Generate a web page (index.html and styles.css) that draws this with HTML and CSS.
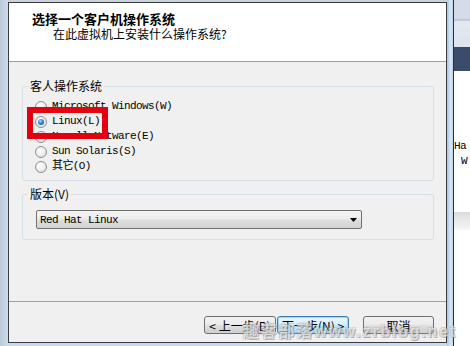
FILE: index.html
```html
<!DOCTYPE html>
<html lang="zh-CN">
<head>
<meta charset="utf-8">
<title>新建虚拟机向导</title>
<link rel="stylesheet" href="styles.css">
</head>
<body>
<div class="screen">
  <div class="frame-left"></div>
  <div class="dialog">
    <div class="header">
      <div class="title">选择一个客户机操作系统</div>
      <div class="subtitle">在此虚拟机上安装什么操作系统?</div>
    </div>
    <div class="content">
      <fieldset class="group">
        <legend>客人操作系统</legend>
        <div class="group-body os-list">
          <div class="radio-row"><span class="radio"></span><span class="rlabel">Microsoft Windows(W)</span></div>
          <div class="radio-row"><span class="radio checked"></span><span class="rlabel">Linux(L)</span></div>
          <div class="radio-row"><span class="radio"></span><span class="rlabel">Novell Netware(E)</span></div>
          <div class="radio-row"><span class="radio"></span><span class="rlabel">Sun Solaris(S)</span></div>
          <div class="radio-row"><span class="radio"></span><span class="rlabel">其它(O)</span></div>
        </div>
      </fieldset>
      <fieldset class="group group-ver">
        <legend>版本(V)</legend>
        <div class="group-body ver-body">
          <div class="select">
            <span class="select-text">Red Hat Linux</span>
            <svg class="select-arrow" width="7" height="4" viewBox="0 0 7 4"><path d="M0 0H7L3.5 4Z" fill="#000"/></svg>
          </div>
        </div>
      </fieldset>
    </div>
    <div class="footer">
      <button class="btn btn-back">&lt; 上一步(B)</button>
      <button class="btn btn-next">下一步(N) &gt;</button>
      <button class="btn btn-cancel">取消</button>
    </div>
  </div>
  <div class="frame-right"></div>
  <div class="behind">
    <div class="behind-top"></div>
    <div class="behind-bar"></div>
    <div class="behind-text">Ha</div>
    <div class="behind-text behind-w">W</div>
    <div class="behind-band"></div>
  </div>
  <div class="highlight"></div>
  <div class="watermark">趣客部落www.zrblog.net</div>
</div>
</body>
</html>
```
FILE: styles.css
```css
html, body {
  margin: 0;
  padding: 0;
}
body {
  font-family: "Noto Sans CJK SC", "Liberation Sans", sans-serif;
  color: #000;
}
.screen {
  position: relative;
  width: 470px;
  height: 346px;
  display: flex;
  overflow: hidden;
  background: linear-gradient(180deg, #c9d3df 0px, #c4d6ea 90px, #c6dbf1 346px);
}
.frame-left {
  width: 8px;
  flex: none;
  background: linear-gradient(90deg, #bcc9d8, #cbdcef);
}
.dialog {
  width: 439px;
  height: 341px;
  margin-top: 2px;
  box-sizing: border-box;
  border: 1px solid #3c3c3c;
  flex: none;
  display: flex;
  flex-direction: column;
  background: #f0f0f0;
}
.header {
  height: 50px;
  padding: 8px 0 0 23px;
  background: #fff;
  border-bottom: 1px solid #a0a0a0;
}
.title {
  font-size: 13px;
  line-height: 16px;
  font-weight: bold;
}
.subtitle {
  font-size: 12px;
  line-height: 15px;
  margin-top: -1px;
  padding-left: 21px;
}
.content {
  flex: 1;
  padding: 17px 12px 0 13px;
}
.group {
  margin: 0;
  padding: 0;
  min-width: 0;
  border: 1px solid #d5dfe5;
  border-radius: 3px;
}
.group legend {
  margin-left: 5px;
  padding: 0 2px;
  font-size: 12px;
  line-height: 14px;
}
.group-ver {
  margin-top: 6px;
}
.os-list {
  padding: 6px 12px 6px 12px;
}
.radio-row {
  height: 15px;
  display: flex;
  align-items: center;
}
.radio {
  width: 12px;
  height: 12px;
  box-sizing: border-box;
  border-radius: 50%;
  border: 1px solid #8c8f94;
  background: radial-gradient(circle at 40% 35%, #ffffff 0, #f2f2f2 40%, #d6d6d6 100%);
  margin-right: 5px;
  flex: none;
  display: flex;
  align-items: center;
  justify-content: center;
}
.radio.checked::after {
  content: "";
  width: 6px;
  height: 6px;
  border-radius: 50%;
  background: radial-gradient(circle at 40% 35%, #9fd6fb 0, #2b76b8 55%, #0f3f78 100%);
}
.rlabel {
  font-family: "Liberation Mono", "Noto Sans CJK SC", monospace;
  font-size: 11px;
  letter-spacing: -0.6px;
  line-height: 15px;
}
.ver-body {
  padding: 9px 12px 10px 13px;
}
.select {
  width: 326px;
  height: 19px;
  box-sizing: border-box;
  border: 1px solid #707070;
  border-radius: 2px;
  background: linear-gradient(180deg, #f4f4f4 0%, #ececec 45%, #dedede 55%, #d2d2d2 100%);
  display: flex;
  align-items: center;
  justify-content: space-between;
  padding: 0 4px 0 3px;
}
.select-text {
  font-family: "Liberation Mono", monospace;
  font-size: 11px;
  letter-spacing: -0.6px;
}
.select-arrow {
  display: block;
}
.footer {
  height: 26px;
  border-top: 1px solid #a0a0a0;
  padding: 14px 12px 0 0;
  display: flex;
  justify-content: flex-end;
  align-items: flex-start;
}
.btn {
  height: 18px;
  width: 72px;
  box-sizing: border-box;
  padding: 0;
  border: 1px solid #707070;
  border-radius: 3px;
  background: linear-gradient(180deg, #f2f2f2 0%, #ebebeb 45%, #dddddd 55%, #cfcfcf 100%);
  font-family: "Noto Sans CJK SC", sans-serif;
  font-size: 12px;
  line-height: 15px;
  color: #000;
}
.btn-next {
  margin-left: 1px;
  border-color: #3c7fb1;
  box-shadow: inset 0 0 0 1px #9ed6f6;
  background: linear-gradient(180deg, #eaf6fd 0%, #d9f0fc 45%, #bee6fd 55%, #a7d9f5 100%);
}
.btn-cancel {
  width: 71px;
  margin-left: 14px;
}
.frame-right {
  width: 6px;
  flex: none;
  border-right: 1px solid #2e2e2e;
  background: linear-gradient(90deg, #a9c4e2, #d8e7f6 60%, #bcd3ec);
}
.behind {
  width: 16px;
  flex: none;
  background: #fff;
  display: flex;
  flex-direction: column;
}
.behind-top {
  height: 47px;
  background: linear-gradient(180deg, #d5dbe8 0, #d5dbe8 19px, #aab3c4 20px, #e4e8f1 21px, #dfe3ee 47px);
}
.behind-bar {
  height: 24px;
  background: #3b4c6b;
}
.behind-text {
  font-family: "Liberation Mono", monospace;
  font-size: 11px;
  line-height: 14px;
  letter-spacing: -0.6px;
  margin-top: 68px;
}
.behind-w {
  margin-top: 1px;
  padding-left: 7px;
}
.behind-band {
  height: 18px;
  margin-top: 44px;
  background: linear-gradient(180deg, #dcdcdc, #f6f6f6);
}
.highlight {
  position: absolute;
  left: 27px;
  top: 107px;
  width: 81px;
  height: 32px;
  box-sizing: border-box;
  border: 6px solid #e3000f;
}
.watermark {
  position: absolute;
  left: 243px;
  top: 318px;
  font-family: "Liberation Sans", "Noto Sans CJK SC", sans-serif;
  font-size: 16px;
  font-weight: bold;
  letter-spacing: 1.8px;
  white-space: nowrap;
  color: rgba(255, 255, 255, 0.55);
  text-shadow: 1px 1px 0 rgba(110, 110, 110, 0.45), -1px -1px 0 rgba(170, 170, 170, 0.35), 1px -1px 0 rgba(170, 170, 170, 0.35), -1px 1px 0 rgba(170, 170, 170, 0.35);
}
```
